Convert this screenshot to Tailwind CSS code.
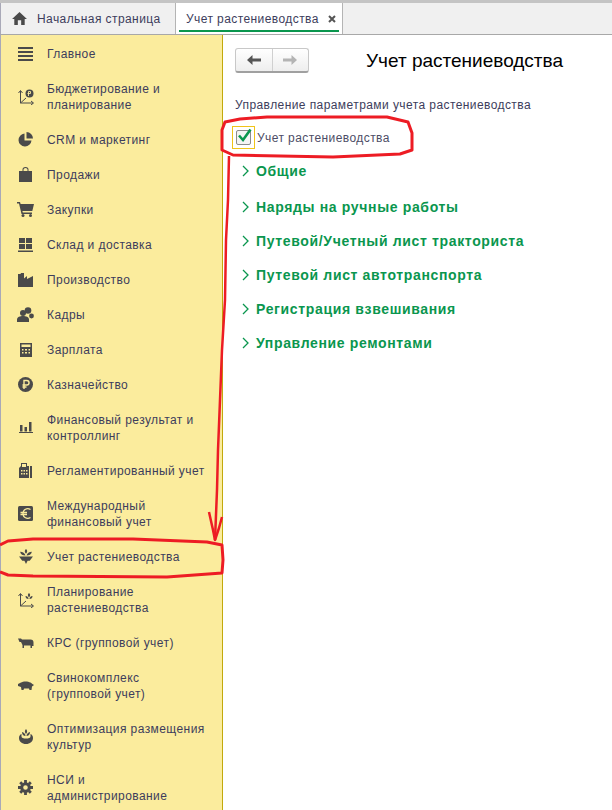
<!DOCTYPE html>
<html lang="ru">
<head>
  <meta charset="UTF-8" />
  <title>Учет растениеводства</title>
  <script src="https://cdn.jsdelivr.net/npm/@tailwindcss/browser@4"></script>
</head>
<body class="bg-white overflow-hidden">
  <div class="relative w-[612px] h-[810px] overflow-hidden font-['Liberation_Sans',Arial,sans-serif] text-[12px] tracking-[0.42px] text-[#3d3d5c]">
    <div class="h-[3px] bg-[#c4c4c4]"></div>

    <!-- Tabs -->
    <div class="flex h-[32px] bg-[#f0f0f0] border-b border-[#a8a8a8]">
      <div class="flex items-center w-[176px] border-r border-[#b4b4b4] border-l border-l-[#a9a9b8] pl-[11px]">
        <svg class="w-[15px] h-[13px] mr-[10px]" viewBox="0 0 16 14" fill="#4a4a4a"><path d="M8 0 L16 7.500 H13.600 V14 H9.800 V9 H6.200 V14 H2.400 V7.500 H0 Z"/></svg>
        <span>Начальная страница</span>
      </div>
      <div class="relative flex items-center w-[167px] bg-white border-r border-[#b4b4b4] pl-[10px]">
        <span>Учет растениеводства</span>
        <svg class="w-[8px] h-[8px] ml-[9px]" viewBox="0 0 8 8" stroke="#555" stroke-width="2"><path d="M1 1 L7 7 M7 1 L1 7"/></svg>
        <div class="absolute left-[3px] right-[3px] bottom-[2px] h-[2px] bg-[#0a964e]"></div>
      </div>
    </div>

    <div class="flex h-[775px]">
      <!-- Sidebar -->
      <aside class="w-[223px] shrink-0 bg-[#fbec9d] border-l border-l-[#a9a9b8] border-r border-r-[#c2a90c] pt-px">
        <div class="flex items-center h-[35px]">
          <span class="w-[46px] flex justify-center pl-[3px]"><svg class="w-[15px] h-[14px]" viewBox="0 0 15 14" fill="#4a4a4a"><path d="M0 0h15v2H0zM0 4h15v2H0zM0 8h15v2H0zM0 12h15v2H0z"/></svg></span>
          <span>Главное</span>
        </div>
        <div class="flex items-center h-[51px]">
          <span class="w-[46px] flex justify-center pl-[3px]"><svg class="w-[16px] h-[16px]" viewBox="0 0 16 16" fill="none" stroke="#4a4a4a" stroke-width="1"><path d="M2.500 2V14H15M2.500 14L8 9"/><path d="M0.500 4L2.500 1.500L4.500 4M13 12L15.500 14L13 16"/><circle cx="11.500" cy="4.500" r="4" fill="#4a4a4a" stroke="none"/><path d="M10.500 7V2.500H12.500V4.500H9.500" stroke="#fbec9d" stroke-width="0.900"/></svg></span>
          <span class="leading-[16px]">Бюджетирование и<br>планирование</span>
        </div>
        <div class="flex items-center h-[35px]">
          <span class="w-[46px] flex justify-center pl-[3px]"><svg class="w-[15px] h-[15px]" viewBox="0 0 15 15" fill="#4a4a4a"><path d="M6.500 1.500A6.500 6.500 0 1 0 13.500 8.500H6.500Z"/><path d="M8.500 0A6.500 6.500 0 0 1 15 6.500H8.500Z"/></svg></span>
          <span>CRM и маркетинг</span>
        </div>
        <div class="flex items-center h-[35px]">
          <span class="w-[46px] flex justify-center pl-[3px]"><svg class="w-[13px] h-[15px]" viewBox="0 0 13 15" fill="#4a4a4a"><path d="M0 4H3.500V2.500A3 2.500 0 0 1 9.500 2.500V4H13V15H0Z M4.500 4H8.500V2.500A2 1.500 0 0 0 4.500 2.500Z" fill-rule="evenodd"/></svg></span>
          <span>Продажи</span>
        </div>
        <div class="flex items-center h-[35px]">
          <span class="w-[46px] flex justify-center pl-[2px]"><svg class="w-[17px] h-[15px]" viewBox="0 0 17 15" fill="#4a4a4a"><path d="M0 0H3L3.600 2H17L15.300 9H5.400L5.800 10.500H15V12H4.500L2 1.500H0Z"/><circle cx="6" cy="13.500" r="1.500"/><circle cx="13.500" cy="13.500" r="1.500"/></svg></span>
          <span>Закупки</span>
        </div>
        <div class="flex items-center h-[35px]">
          <span class="w-[46px] flex justify-center pl-[3px]"><svg class="w-[15px] h-[14px]" viewBox="0 0 15 14" fill="#4a4a4a"><path d="M1 0H7V5H1ZM8 0H14V5H8ZM1 6H7V11H1ZM8 6H14V11H8ZM0 12.500H15V14H0Z"/></svg></span>
          <span>Склад и доставка</span>
        </div>
        <div class="flex items-center h-[35px]">
          <span class="w-[46px] flex justify-center pl-[3px]"><svg class="w-[15px] h-[14px]" viewBox="0 0 15 14" fill="#4a4a4a"><path d="M0 14V1H2.500L3 0H6V5.500L9 3V6L15 3V14Z"/></svg></span>
          <span>Производство</span>
        </div>
        <div class="flex items-center h-[35px]">
          <span class="w-[46px] flex justify-center pl-[2px]"><svg class="w-[17px] h-[15px]" viewBox="0 0 17 15" fill="#4a4a4a"><circle cx="11" cy="3.500" r="3.300"/><circle cx="14.500" cy="9" r="2.400"/><circle cx="6" cy="6" r="3"/><path d="M0 15V12.500C0 10 3 9 6 9S12 10 12 12.500V15Z"/></svg></span>
          <span>Кадры</span>
        </div>
        <div class="flex items-center h-[35px]">
          <span class="w-[46px] flex justify-center pl-[3px]"><svg class="w-[12px] h-[14px]" viewBox="0 0 12 14" fill="#4a4a4a"><path fill-rule="evenodd" d="M0 0H12V14H0ZM1.500 1.500V4H10.500V1.500ZM2 6V7.500H3.500V6ZM5 6V7.500H7V6ZM8.500 6V7.500H10V6ZM2 9V10.500H3.500V9ZM5 9V10.500H7V9ZM8.500 9V10.500H10V9Z"/></svg></span>
          <span>Зарплата</span>
        </div>
        <div class="flex items-center h-[35px]">
          <span class="w-[46px] flex justify-center pl-[3px]"><svg class="w-[15px] h-[15px]" viewBox="0 0 15 15"><circle cx="7.500" cy="7.500" r="7.500" fill="#4a4a4a"/><path d="M6 12V3.500H8.800A2.200 2.200 0 0 1 8.800 8H4.500M4.500 10H8.500" fill="none" stroke="#fbec9d" stroke-width="1.400"/></svg></span>
          <span>Казначейство</span>
        </div>
        <div class="flex items-center h-[51px]">
          <span class="w-[46px] flex justify-center pl-[3px]"><svg class="w-[14px] h-[11px]" viewBox="0 0 14 11" fill="#4a4a4a"><path d="M1 3H3.500V9.500H1ZM5.500 5H8V9.500H5.500ZM10 0H12.500V9.500H10ZM0 10H14V11H0Z"/></svg></span>
          <span class="leading-[16px]">Финансовый результат и<br>контроллинг</span>
        </div>
        <div class="flex items-center h-[35px]">
          <span class="w-[46px] flex justify-center pl-[3px]"><svg class="w-[13px] h-[15px]" viewBox="0 0 13 15" fill="#4a4a4a"><path fill-rule="evenodd" d="M2 0H8V3H10V15H0V5L2 3ZM3 1V4H7V1ZM2 7V8.500H3.500V7ZM4.500 7V8.500H6V7ZM7 7V8.500H8.500V7ZM2 10V11.500H3.500V10ZM4.500 10V11.500H6V10ZM7 10V11.500H8.500V10Z"/><path d="M11 3H13V15H11Z"/></svg></span>
          <span>Регламентированный учет</span>
        </div>
        <div class="flex items-center h-[51px]">
          <span class="w-[46px] flex justify-center pl-[3px]"><svg class="w-[15px] h-[15px]" viewBox="0 0 15 15"><rect width="15" height="15" rx="1.500" fill="#4a4a4a"/><path d="M12.500 3.500C9 1.500 5 3.500 5 7.500S9 13.500 12.500 11.500M2.500 6.500H9M2.500 8.500H9" fill="none" stroke="#fbec9d" stroke-width="1.300"/></svg></span>
          <span class="leading-[16px]">Международный<br>финансовый учет</span>
        </div>
        <div class="flex items-center h-[35px]">
          <span class="w-[46px] flex justify-center pl-[3px]"><svg class="w-[14px] h-[15px]" viewBox="0 0 13 14" fill="#4a4a4a"><path d="M6.500 0C8 1 8 3 6.500 4.500C5 3 5 1 6.500 0ZM1 2.500C3.500 2.500 5.500 4 6 6C3.500 6 1.500 5 1 2.500ZM12 2.500C11.500 5 9.500 6 7 6C7.500 4 9.500 2.500 12 2.500ZM0 7H13L10 11H8L6.500 14L5 11H3Z"/></svg></span>
          <span>Учет растениеводства</span>
        </div>
        <div class="flex items-center h-[51px]">
          <span class="w-[46px] flex justify-center pl-[3px]"><svg class="w-[16px] h-[16px]" viewBox="0 0 16 16" fill="none" stroke="#4a4a4a" stroke-width="1"><path d="M2.500 2V14H15M2.500 14L8 9"/><path d="M0.500 4L2.500 1.500L4.500 4M13 12L15.500 14L13 16"/><path d="M11 1C12.500 2 12.500 4 11 5.500C9.500 4 9.500 2 11 1ZM7.500 4C9.500 4 10.500 5.500 10.500 7C8.500 7 7.500 6 7.500 4ZM14.500 4C14.500 6 13.500 7 11.500 7C11.500 5.500 12.500 4 14.500 4Z" fill="#4a4a4a" stroke="none"/></svg></span>
          <span class="leading-[16px]">Планирование<br>растениеводства</span>
        </div>
        <div class="flex items-center h-[35px]">
          <span class="w-[46px] flex justify-center pl-[3px]"><svg class="w-[16px] h-[10px]" viewBox="0 0 16 10" fill="#4a4a4a"><path d="M0 0.500H3L4 1.500H12.500C14.500 1.500 15.500 2.500 15.500 4.500V8H14V10H12.500V7.500H6V10H4.500V7L3 4H1.500Z"/></svg></span>
          <span>КРС (групповой учет)</span>
        </div>
        <div class="flex items-center h-[51px]">
          <span class="w-[46px] flex justify-center pl-[3px]"><svg class="w-[16px] h-[10px]" viewBox="0 0 16 10" fill="#4a4a4a"><path d="M0 3L3 1.500C5 0 10 0 12.500 1.500C14 2.500 15 3.500 16 4L14 5.500L13.500 9H11.500L11 7.500H6L5.500 9H3.500L3 6L0 5Z"/></svg></span>
          <span class="leading-[16px]">Свинокомплекс<br>(групповой учет)</span>
        </div>
        <div class="flex items-center h-[51px]">
          <span class="w-[46px] flex justify-center pl-[3px]"><svg class="w-[14px] h-[15px]" viewBox="0 0 14 15" fill="#4a4a4a"><path d="M7 0C8.500 1.500 8.500 3.500 7 5C5.500 3.500 5.500 1.500 7 0ZM3 3C5 3.500 6.500 5 6.500 7C4.500 7 3 5.500 3 3ZM11 3C11 5.500 9.500 7 7.500 7C7.500 5 9 3.500 11 3Z"/><path d="M2.500 5V7.500C2.500 9 4.500 9.500 7 9.500S11.500 9 11.500 7.500V5C13 5.500 14 7 14 9C14 12.500 11 15 7 15S0 12.500 0 9C0 7 1 5.500 2.500 5Z"/></svg></span>
          <span class="leading-[16px]">Оптимизация размещения<br>культур</span>
        </div>
        <div class="flex items-center h-[51px]">
          <span class="w-[46px] flex justify-center pl-[3px]"><svg class="w-[15px] h-[15px]" viewBox="0 0 15 15"><circle cx="7.500" cy="7.500" r="3.800" fill="none" stroke="#4a4a4a" stroke-width="3"/><path d="M7.500 0V3M7.500 12V15M0 7.500H3M12 7.500H15M2.200 2.200L4.200 4.200M10.800 10.800L12.800 12.800M12.800 2.200L10.800 4.200M4.200 10.800L2.200 12.800" stroke="#4a4a4a" stroke-width="2.800"/></svg></span>
          <span class="leading-[16px]">НСИ и<br>администрирование</span>
        </div>
      </aside>

      <!-- Content -->
      <main class="flex-1 pl-[12px]">
        <div class="flex items-center h-[26px] mt-[12px]">
          <div class="flex w-[74px] h-[25px] rounded-[3px] border border-[#c8c8c8] border-b-[#a0a0a0] border-b-2 bg-gradient-to-b from-white to-[#eeeeee]">
            <div class="w-[37px] flex items-center justify-center border-r border-[#d0d0d0]">
              <svg class="w-[14px] h-[10px]" viewBox="0 0 14 10" fill="#555"><path d="M0 5L5.500 0V3.500H14V6.500H5.500V10Z"/></svg>
            </div>
            <div class="w-[36px] flex items-center justify-center">
              <svg class="w-[14px] h-[10px]" viewBox="0 0 14 10" fill="#b4b4b4"><path d="M14 5L8.500 0V3.500H0V6.500H8.500V10Z"/></svg>
            </div>
          </div>
          <h1 class="ml-[57px] mt-[2px] text-[19px] tracking-normal leading-[24px] text-black">Учет растениеводства</h1>
        </div>
        <p class="mt-[24px] leading-[16px]">Управление параметрами учета растениеводства</p>
        <label class="flex items-center h-[23px] mt-[13px] -ml-[3px]">
          <span class="w-[23px] h-[23px] flex items-center justify-center border border-[#f0c419] shrink-0">
            <span class="relative w-[15px] h-[15px] border border-[#8c8c8c] rounded-[2px] bg-[#f4f4f4]">
              <svg class="absolute -top-[3px] left-0 w-[15px] h-[15px]" viewBox="0 0 15 15" fill="none" stroke="#0a964e" stroke-width="2.600"><path d="M2 7.500L6 12L13.500 1.500"/></svg>
            </span>
          </span>
          <span class="ml-[2px] text-[#4d4d66]">Учет растениеводства</span>
        </label>
        <ul class="mt-[5px] text-[14px] font-bold text-[#0a964e] tracking-[0.65px]">
          <li class="flex items-center h-[34px]"><svg class="w-[7px] h-[12px] ml-[7px] mr-[7px]" viewBox="0 0 7 12" fill="none" stroke="#0a964e" stroke-width="1.300"><path d="M1 1L6 6L1 11"/></svg>Общие</li>
          <li class="flex items-center h-[34px] mt-[2px]"><svg class="w-[7px] h-[12px] ml-[7px] mr-[7px]" viewBox="0 0 7 12" fill="none" stroke="#0a964e" stroke-width="1.300"><path d="M1 1L6 6L1 11"/></svg>Наряды на ручные работы</li>
          <li class="flex items-center h-[34px]"><svg class="w-[7px] h-[12px] ml-[7px] mr-[7px]" viewBox="0 0 7 12" fill="none" stroke="#0a964e" stroke-width="1.300"><path d="M1 1L6 6L1 11"/></svg>Путевой/Учетный лист тракториста</li>
          <li class="flex items-center h-[34px]"><svg class="w-[7px] h-[12px] ml-[7px] mr-[7px]" viewBox="0 0 7 12" fill="none" stroke="#0a964e" stroke-width="1.300"><path d="M1 1L6 6L1 11"/></svg>Путевой лист автотранспорта</li>
          <li class="flex items-center h-[34px]"><svg class="w-[7px] h-[12px] ml-[7px] mr-[7px]" viewBox="0 0 7 12" fill="none" stroke="#0a964e" stroke-width="1.300"><path d="M1 1L6 6L1 11"/></svg>Регистрация взвешивания</li>
          <li class="flex items-center h-[34px]"><svg class="w-[7px] h-[12px] ml-[7px] mr-[7px]" viewBox="0 0 7 12" fill="none" stroke="#0a964e" stroke-width="1.300"><path d="M1 1L6 6L1 11"/></svg>Управление ремонтами</li>
        </ul>
      </main>
    </div>

    <!-- Red hand-drawn annotation -->
    <svg class="absolute left-0 top-0 w-[612px] h-[810px] pointer-events-none" viewBox="0 0 612 810" fill="none" stroke="#ed1c24" stroke-width="3" stroke-linejoin="round">
      <path d="M225 122L240 119L267 117L387 117L408 122L412 133L412 150L400 154L333 157L233 155L222 150L222 130Z"/>
      <path d="M229 156L228 200L226 240L225 300L222 350L220 400L218 450L217 490L215 540" stroke-width="2.500"/>
      <path d="M209 512L213 530L215 540L219 528L222 517" stroke-width="2.500"/>
      <path d="M0 545L8 541L33 539L133 539L207 542L222 545L223 560L222 573L167 577L33 576L8 575L0 572"/>
    </svg>
  </div>
</body>
</html>
